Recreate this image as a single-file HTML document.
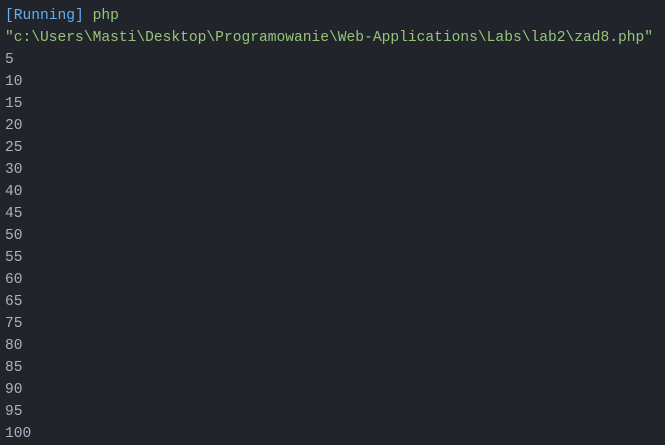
<!DOCTYPE html>
<html><head><style>
html,body{margin:0;padding:0;background:#21252b;width:665px;height:445px;overflow:hidden}
pre{margin:0;padding:5px 0 0 5px;font-family:"Liberation Mono",monospace;font-size:14.6px;line-height:22px;color:#abb2bf}
.b{color:#61afef}.g{color:#98c379}
</style></head><body><pre><span class="b">[Running]</span> <span class="g">php</span>
<span class="g">"c:\Users\Masti\Desktop\Programowanie\Web-Applications\Labs\lab2\zad8.php"</span>
5
10
15
20
25
30
40
45
50
55
60
65
75
80
85
90
95
100</pre></body></html>
